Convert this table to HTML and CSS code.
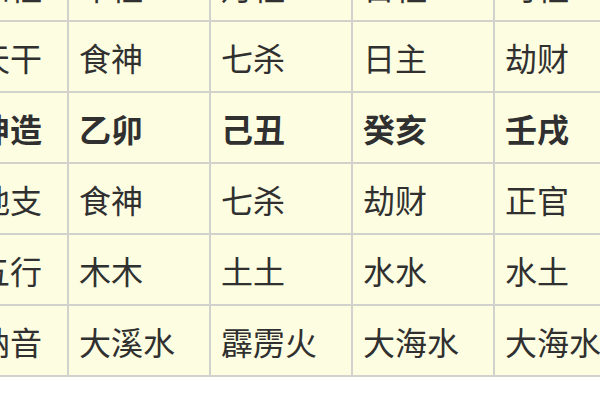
FILE: index.html
```html
<!DOCTYPE html>
<html lang="zh-CN">
<head>
<meta charset="utf-8">
<link rel="stylesheet" href="styles.css">
</head>
<body>
<div class="grid">
  <div class="cell label">四柱</div><div class="cell">年柱</div><div class="cell">月柱</div><div class="cell">日柱</div><div class="cell">时柱</div><div class="cell"></div>
  <div class="cell label">天干</div><div class="cell">食神</div><div class="cell">七杀</div><div class="cell">日主</div><div class="cell">劫财</div><div class="cell"></div>
  <div class="cell label bold">坤造</div><div class="cell bold">乙卯</div><div class="cell bold">己丑</div><div class="cell bold">癸亥</div><div class="cell bold">壬戌</div><div class="cell"></div>
  <div class="cell label">地支</div><div class="cell">食神</div><div class="cell">七杀</div><div class="cell">劫财</div><div class="cell">正官</div><div class="cell"></div>
  <div class="cell label">五行</div><div class="cell">木木</div><div class="cell">土土</div><div class="cell">水水</div><div class="cell">水土</div><div class="cell"></div>
  <div class="cell label">纳音</div><div class="cell">大溪水</div><div class="cell">霹雳火</div><div class="cell">大海水</div><div class="cell">大海水</div><div class="cell"></div>
</div>
</body>
</html>
```
FILE: styles.css
```css
html, body {
  margin: 0;
  padding: 0;
  background: #ffffff;
  overflow: hidden;
}
body {
  width: 600px;
  height: 400px;
}
.grid {
  display: grid;
  grid-template-columns: repeat(6, 140px);
  grid-auto-rows: 69px;
  gap: 2px;
  padding: 2px;
  background: #d2d2cc;
  width: max-content;
  margin-left: -75px;
  margin-top: -51px;
}
.cell {
  background: #fdfde1;
  display: flex;
  align-items: center;
  padding-left: 10px;
  font-family: "Noto Sans CJK SC", "Noto Sans", sans-serif;
  font-size: 32px;
  color: #303030;
  white-space: nowrap;
  overflow: hidden;
}
.label {
  justify-content: flex-end;
  padding-left: 0;
  padding-right: 25px;
}
.bold {
  font-weight: 700;
}
```
